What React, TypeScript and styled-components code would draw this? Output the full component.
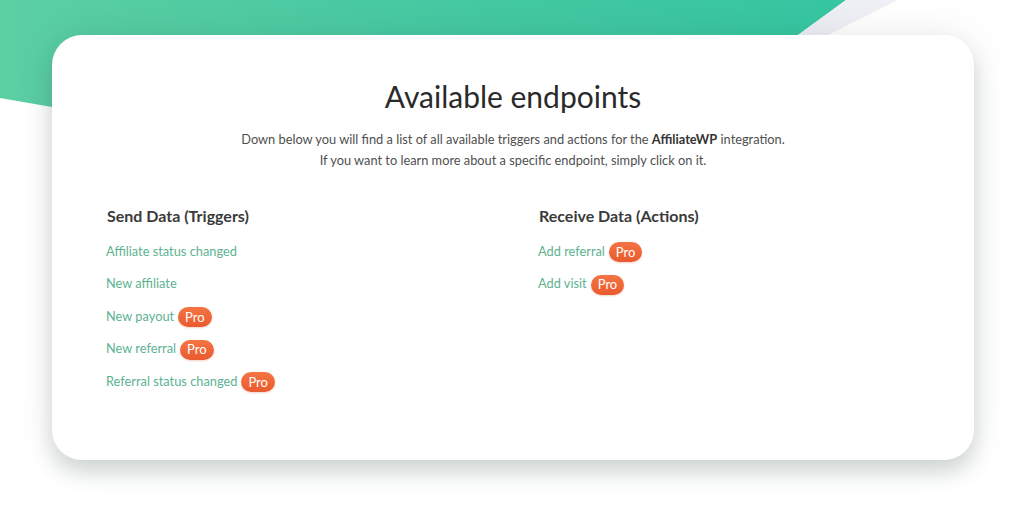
import React from 'react';
import styled, { createGlobalStyle } from 'styled-components';

const GlobalStyle = createGlobalStyle`
  html, body {
    margin: 0;
    padding: 0;
    background: #ffffff;
  }
  body {
    font-family: Lato, "Open Sans", sans-serif;
  }
`;

const Page = styled.div`
  position: relative;
  width: 1024px;
  height: 506px;
  overflow: hidden;
  background: #ffffff;
  padding: 35px 50px 0 52px;
  box-sizing: border-box;

  /* green band */
  &::before {
    content: '';
    position: absolute;
    inset: 0;
    background: linear-gradient(90deg, #5ccfa3 0%, #45c9a2 45%, #2fc5a1 100%);
    clip-path: polygon(0 0, 846px 0, 699px 107px, 52px 107px, 0 98px);
    z-index: 0;
  }

  /* lavender stripe */
  &::after {
    content: '';
    position: absolute;
    inset: 0;
    background: linear-gradient(90deg, #dde1ee 0%, #e9ebf3 60%, #f2f3f7 100%);
    clip-path: polygon(846px 0, 898px 0, 828px 35px, 798px 35px);
    z-index: 0;
  }
`;

const Card = styled.section`
  position: relative;
  z-index: 1;
  width: 922px;
  height: 425px;
  box-sizing: border-box;
  background: #ffffff;
  border-radius: 30px;
  box-shadow: 0 12px 20px rgba(70, 100, 95, 0.22), 0 0 40px rgba(0, 0, 0, 0.08);
  padding: 43px 54px 0 54px;
`;

const Title = styled.h1`
  margin: 0;
  text-align: center;
  font-size: 30px;
  font-weight: 400;
  color: #2a2a2a;
  line-height: 36px;
`;

const Intro = styled.p`
  margin: 15px 0 0 0;
  text-align: center;
  font-size: 12.8px;
  line-height: 21px;
  color: #4f4f4f;

  strong {
    font-weight: 700;
    color: #333;
  }
`;

const Columns = styled.div`
  display: grid;
  grid-template-columns: 432px 1fr;
  margin-top: 35px;
`;

const Column = styled.div`
  display: flex;
  flex-direction: column;
`;

const ColumnTitle = styled.h3`
  margin: 0 0 16px 1px;
  font-size: 16px;
  font-weight: 700;
  color: #3a3a3a;
  line-height: 20px;
`;

const EndpointList = styled.ul`
  list-style: none;
  margin: 0;
  padding: 0;
  display: flex;
  flex-direction: column;
  gap: 12px;
`;

const Endpoint = styled.li`
  display: flex;
  align-items: center;
  gap: 4px;
  height: 20.5px;
`;

const EndpointLink = styled.a`
  font-size: 12.8px;
  color: #5db291;
  text-decoration: none;
  cursor: pointer;
  margin-top: -3px;
`;

const ProBadge = styled.span`
  display: inline-flex;
  align-items: center;
  justify-content: center;
  height: 20px;
  padding: 0 7px;
  border-radius: 10px;
  background: linear-gradient(180deg, #f47443 0%, #e95a2f 100%);
  color: #ffffff;
  font-size: 13px;
  line-height: 1;
  box-shadow: 0 1px 2px rgba(200, 80, 40, 0.25);
`;

type Item = { name: string; pro?: boolean };

const triggers: Item[] = [
  { name: 'Affiliate status changed' },
  { name: 'New affiliate' },
  { name: 'New payout', pro: true },
  { name: 'New referral', pro: true },
  { name: 'Referral status changed', pro: true },
];

const actions: Item[] = [
  { name: 'Add referral', pro: true },
  { name: 'Add visit', pro: true },
];

const EndpointColumn: React.FC<{ title: string; items: Item[] }> = ({ title, items }) => (
  <Column>
    <ColumnTitle>{title}</ColumnTitle>
    <EndpointList>
      {items.map((item) => (
        <Endpoint key={item.name}>
          <EndpointLink>{item.name}</EndpointLink>
          {item.pro && <ProBadge>Pro</ProBadge>}
        </Endpoint>
      ))}
    </EndpointList>
  </Column>
);

export default function App() {
  return (
    <>
      <GlobalStyle />
      <Page>
        <Card>
          <Title>Available endpoints</Title>
          <Intro>
            Down below you will find a list of all available triggers and actions for the{' '}
            <strong>AffiliateWP</strong> integration.
            <br />
            If you want to learn more about a specific endpoint, simply click on it.
          </Intro>
          <Columns>
            <EndpointColumn title="Send Data (Triggers)" items={triggers} />
            <EndpointColumn title="Receive Data (Actions)" items={actions} />
          </Columns>
        </Card>
      </Page>
    </>
  );
}
